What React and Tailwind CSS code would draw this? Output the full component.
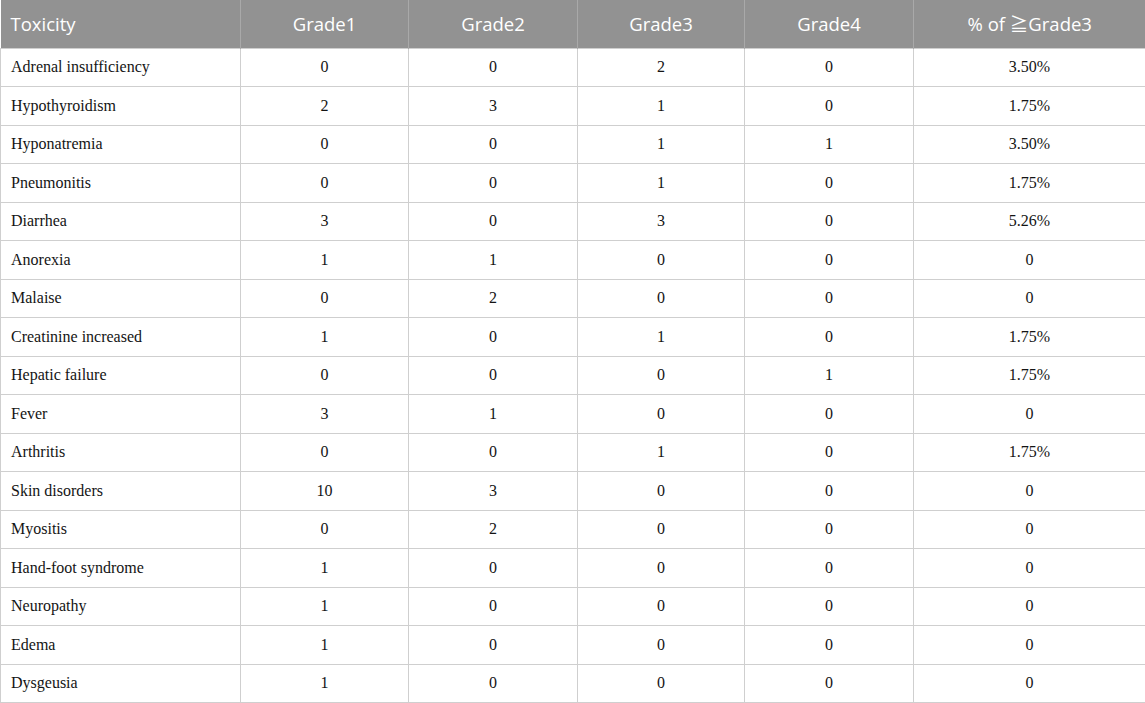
const rows = [
  ["Adrenal insufficiency", "0", "0", "2", "0", "3.50%"],
  ["Hypothyroidism", "2", "3", "1", "0", "1.75%"],
  ["Hyponatremia", "0", "0", "1", "1", "3.50%"],
  ["Pneumonitis", "0", "0", "1", "0", "1.75%"],
  ["Diarrhea", "3", "0", "3", "0", "5.26%"],
  ["Anorexia", "1", "1", "0", "0", "0"],
  ["Malaise", "0", "2", "0", "0", "0"],
  ["Creatinine increased", "1", "0", "1", "0", "1.75%"],
  ["Hepatic failure", "0", "0", "0", "1", "1.75%"],
  ["Fever", "3", "1", "0", "0", "0"],
  ["Arthritis", "0", "0", "1", "0", "1.75%"],
  ["Skin disorders", "10", "3", "0", "0", "0"],
  ["Myositis", "0", "2", "0", "0", "0"],
  ["Hand-foot syndrome", "1", "0", "0", "0", "0"],
  ["Neuropathy", "1", "0", "0", "0", "0"],
  ["Edema", "1", "0", "0", "0", "0"],
  ["Dysgeusia", "1", "0", "0", "0", "0"],
];

const headers = ["Grade1", "Grade2", "Grade3", "Grade4", "% of \u2267Grade3"];

export default function App() {
  return (
    <div className="w-[1145px] h-[703px] bg-white overflow-hidden">
      <table className="w-[1145px] table-fixed border-collapse">
        <colgroup>
          <col className="w-[240px]" />
          <col className="w-[168px]" />
          <col className="w-[169px]" />
          <col className="w-[167px]" />
          <col className="w-[169px]" />
          <col className="w-[232px]" />
        </colgroup>
        <thead>
          <tr className="h-[48px] bg-[#929292] text-white text-[18.5px] font-['Open_Sans','Noto_Sans_CJK_JP',sans-serif]">
            <th className="text-left font-normal pl-[10px] border-r border-[#a9a9a9]">Toxicity</th>
            {headers.map((h, i) => (
              <th key={i} className="font-normal text-center border-r border-[#a9a9a9] last:border-r-0">
                {h}
              </th>
            ))}
          </tr>
        </thead>
        <tbody className="text-[16px] text-[#141414] font-['Liberation_Serif',serif]">
          {rows.map((r, i) => (
            <tr key={i} className="h-[38.5px]">
              {r.map((c, j) => (
                <td
                  key={j}
                  className={
                    j === 0
                      ? "pl-[10px] border border-[#cfcfcf]"
                      : "text-center border border-[#cfcfcf]"
                  }
                >
                  {c}
                </td>
              ))}
            </tr>
          ))}
        </tbody>
      </table>
    </div>
  );
}
